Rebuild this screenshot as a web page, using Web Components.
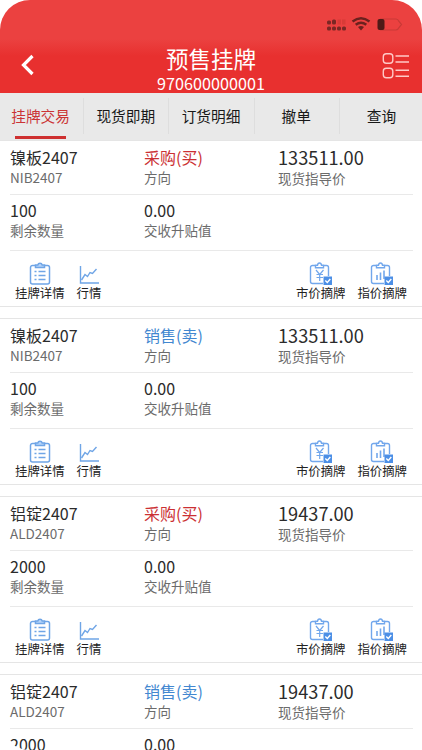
<!DOCTYPE html>
<html lang="zh-CN">
<head>
<meta charset="utf-8">
<title>预售挂牌</title>
<style>
  html, body { margin: 0; height: 750px; overflow: hidden; background: #fff; }
  body { font-family: "Noto Sans CJK SC", sans-serif; }
</style>
</head>
<body>
<trade-app></trade-app>

<script>
// icon drawings, keyed by name
const clipboard = `<path d="M6.500 3.500H3.500a2 2 0 0 0-2 2v14a2 2 0 0 0 2 2H14M19.500 14V5.500a2 2 0 0 0-2-2h-3M6.500 5.800V3.300h2q.2-2.300 2-2.300t2 2.300h2v2.500z"/>`;
const check = `<path d="M14.500 14.500H23V23h-8.500z" fill="#4c8fe6" stroke="none"/><path d="m16.300 18.500 2 2 3-3.500" stroke="#fff"/>`;
const icons = {
  back: `<svg width="16" height="22" viewBox="0 0 16 22" fill="none" stroke="#fff" stroke-width="3.200"><path d="M13.500 2 4.500 11l9 9"/></svg>`,
  menu: `<svg width="28" height="28" viewBox="0 0 28 28" fill="none" stroke="#ffc9c7" stroke-width="1.400"><rect x="1.300" y="1.800" width="9.500" height="9.500" rx="3"/><rect x="1.300" y="16.200" width="9.500" height="9.500" rx="3"/><path d="M13.500 4h13.500M13.500 10h13.500M13.500 18.300h13.500M13.500 24.300h13.500"/></svg>`,
  status: `<svg width="78" height="18" viewBox="0 0 78 18"><g fill="#7a2724"><rect x="1" y="5.500" width="4" height="4" rx="1.500"/><rect x="6" y="4.500" width="4" height="5" rx="1.500"/><rect x="1" y="11.500" width="4" height="4" rx="1.500"/><rect x="6" y="11.500" width="4" height="4" rx="1.500"/><rect x="11" y="11.500" width="4" height="4" rx="1.500"/><rect x="16" y="11.500" width="4" height="4" rx="1.500"/></g><path d="M11.500 4.500h3.500v5h-3.500zM16 4.500h3.500v5H16z" fill="#d93b37"/><path d="M26.500 6.500q8.500-6.500 17 0M29.700 9.800q5.300-4.200 10.600 0" fill="none" stroke="#6b211e" stroke-width="2.400"/><path d="M32 12q3-2 6 0l-3 3.500z" fill="#6b211e"/><path d="M54 4h16q2 0 3 2.500l2.500 3-2.500 3q-1 2.500-3 2.500H54" fill="none" stroke="#c93a36" stroke-width="1.200"/><rect x="51.500" y="4" width="7" height="11" rx="2" fill="#4f1a17"/></svg>`,
  detail: `<svg width="22" height="24" viewBox="0 0 22 24" fill="none" stroke="#6fa5e6" stroke-width="1.500"><path d="M6.500 3.500H3.500a2 2 0 0 0-2 2V20a2 2 0 0 0 2 2h15a2 2 0 0 0 2-2V5.500a2 2 0 0 0-2-2h-3"/><path d="M6.500 5.500V3h2.300q.4-1.800 2.200-1.800T13.200 3h2.300v2.500z" fill="#b5d4fa"/><path d="M5.500 9.500h2m2 0h7M5.500 13.500h2m2 0h7M5.500 17.500h2m2 0h7"/></svg>`,
  chart: `<svg width="22" height="24" viewBox="0 0 22 24" fill="none" stroke="#6fa5e6" stroke-width="1.400"><path d="M2.500 4v17H21"/><path d="m3.500 18 3.500-5.500 2.500 2 2.500-4 2.500 1L18.500 7"/></svg>`,
  market: `<svg width="24" height="24" viewBox="0 0 24 24" fill="none" stroke="#72a7ec" stroke-width="1.400">${clipboard}<path d="m7 8 3.700 4.500L14.500 8M10.700 12.500V19M7.500 12.500h6.500M7.500 15.500h6.500" stroke-width="1.200"/>${check}</svg>`,
  guide: `<svg width="24" height="24" viewBox="0 0 24 24" fill="none" stroke="#72a7ec" stroke-width="1.400">${clipboard}<path d="M7 13v5M10.500 10.500V18M14 8.500V17" stroke-width="1.600"/>${check}</svg>`
};

class TradeIcon extends HTMLElement {
  connectedCallback() {
    const root = this.attachShadow({ mode: 'open' });
    root.innerHTML = `
      <style>:host { display: block; } svg { display: block; }</style>
      ${icons[this.getAttribute('name')]}`;
  }
}
customElements.define('trade-icon', TradeIcon);

// red title bar with the phone status icons above it
class TradeHeader extends HTMLElement {
  connectedCallback() {
    const root = this.attachShadow({ mode: 'open' });
    root.innerHTML = `
      <style>
        :host {
          display: flex;
          flex-direction: column;
          height: 93px;
          color: #fff;
          background: linear-gradient(#eb4140 0 39px, #e8302f 56px);
        }
        .status { display: flex; justify-content: flex-end; height: 44px; padding: 15px 18px 0 0; box-sizing: border-box; }
        .bar { display: grid; grid-template-columns: 60px 1fr 60px; height: 49px; }
        .back { padding: 10px 0 0 19px; }
        .menu { padding: 8px 0 0 20px; }
        .title { text-align: center; white-space: nowrap; }
        h1 { margin: 0; font-size: 22.500px; line-height: 28px; font-weight: 400; }
        p { margin: 0; font-size: 16.200px; line-height: 22px; }
      </style>
      <div class="status"><trade-icon name="status"></trade-icon></div>
      <div class="bar">
        <trade-icon class="back" name="back"></trade-icon>
        <div class="title"><h1><slot></slot></h1><p>${this.getAttribute('account')}</p></div>
        <trade-icon class="menu" name="menu"></trade-icon>
      </div>`;
  }
}
customElements.define('trade-header', TradeHeader);

class TradeTab extends HTMLElement {
  connectedCallback() {
    const root = this.attachShadow({ mode: 'open' });
    root.innerHTML = `
      <style>
        :host {
          display: flex;
          flex-direction: column;
          align-items: center;
          flex: 1;
          height: 46px;
          font-size: 14.700px;
          line-height: 45px;
          color: #181818;
          white-space: nowrap;
        }
        :host([active]) { color: #cb3435; }
        span { height: 43px; }
        i { width: 51px; height: 3px; }
        :host([active]) i { background: #ce3030; }
      </style>
      <span><slot></slot></span><i></i>`;
  }
}
customElements.define('trade-tab', TradeTab);

class TradeTabs extends HTMLElement {
  connectedCallback() {
    const root = this.attachShadow({ mode: 'open' });
    root.innerHTML = `
      <style>
        :host { display: flex; height: 47px; margin: 0 -2px; background: #e9e9e9; }
        ::slotted(:not(:first-child)) {
          background: linear-gradient(#dedede, #dedede) 0 5px / 1px 36px no-repeat;
        }
      </style>
      <slot></slot>`;
  }
}
customElements.define('trade-tabs', TradeTabs);

class TradeAction extends HTMLElement {
  connectedCallback() {
    const root = this.attachShadow({ mode: 'open' });
    root.innerHTML = `
      <style>
        :host {
          display: flex;
          flex-direction: column;
          align-items: center;
          font-size: 12.400px;
          line-height: 14px;
          color: #222;
          white-space: nowrap;
        }
      </style>
      <trade-icon name="${this.getAttribute('icon')}"></trade-icon>
      <span><slot></slot></span>`;
  }
}
customElements.define('trade-action', TradeAction);

// one listing: contract, direction and price, then amounts, then actions
class ListingCard extends HTMLElement {
  connectedCallback() {
    const sell = this.hasAttribute('sell');
    const get = name => this.getAttribute(name);
    const root = this.attachShadow({ mode: 'open' });
    root.innerHTML = `
      <style>
        :host {
          display: block;
          flex: none;
          height: 167px;
          margin-bottom: 11px;
          box-sizing: border-box;
          border-top: 1px solid #e5e5e5;
          border-bottom: 1px solid #e5e5e5;
        }
        .row {
          display: grid;
          grid-template-columns: 134px 134px 1fr;
          margin: 0 9px 0 10px;
          box-sizing: border-box;
          border-bottom: 1px solid #e9e9e9;
          white-space: nowrap;
        }
        .first { height: 54px; padding-top: 6px; }
        .second { height: 56px; padding-top: 5px; }
        b { display: block; font-weight: 400; font-size: 16px; line-height: 20px; color: #2b2b2b; }
        small { display: block; font-size: 13.500px; line-height: 21px; color: #6b6b6b; }
        .buy { color: #cb3033; }
        .sell { color: #4287d0; }
        .price { font-size: 18.200px; }
        .price + small { line-height: 23px; }
        .actions { display: flex; height: 54px; padding: 11px 15px 0; box-sizing: border-box; gap: 12px; }
        .space { flex: 1; }
      </style>
      <div class="row first">
        <div><b>${get('name')}</b><small>${get('code')}</small></div>
        <div><b class="${sell ? 'sell' : 'buy'}">${sell ? '销售(卖)' : '采购(买)'}</b><small>方向</small></div>
        <div><b class="price">${get('price')}</b><small>现货指导价</small></div>
      </div>
      <div class="row second">
        <div><b>${get('amount')}</b><small>剩余数量</small></div>
        <div><b>0.00</b><small>交收升贴值</small></div>
      </div>
      <div class="actions">
        <trade-action icon="detail">挂牌详情</trade-action>
        <trade-action icon="chart">行情</trade-action>
        <div class="space"></div>
        <trade-action icon="market">市价摘牌</trade-action>
        <trade-action icon="guide">指价摘牌</trade-action>
      </div>`;
  }
}
customElements.define('listing-card', ListingCard);

class TradeApp extends HTMLElement {
  connectedCallback() {
    const root = this.attachShadow({ mode: 'open' });
    root.innerHTML = `
      <style>
        :host {
          display: flex;
          flex-direction: column;
          height: 750px;
          overflow: hidden;
          border-radius: 30px;
          background: #fff;
        }
        trade-header, trade-tabs { flex: none; }
      </style>
      <trade-header account="970600000001">预售挂牌</trade-header>
      <trade-tabs>
        <trade-tab active>挂牌交易</trade-tab>
        <trade-tab>现货即期</trade-tab>
        <trade-tab>订货明细</trade-tab>
        <trade-tab>撤单</trade-tab>
        <trade-tab>查询</trade-tab>
      </trade-tabs>
      <listing-card name="镍板2407" code="NIB2407" price="133511.00" amount="100"></listing-card>
      <listing-card sell name="镍板2407" code="NIB2407" price="133511.00" amount="100"></listing-card>
      <listing-card name="铝锭2407" code="ALD2407" price="19437.00" amount="2000"></listing-card>
      <listing-card sell name="铝锭2407" code="ALD2407" price="19437.00" amount="2000"></listing-card>`;
  }
}
customElements.define('trade-app', TradeApp);
</script>
</body>
</html>
